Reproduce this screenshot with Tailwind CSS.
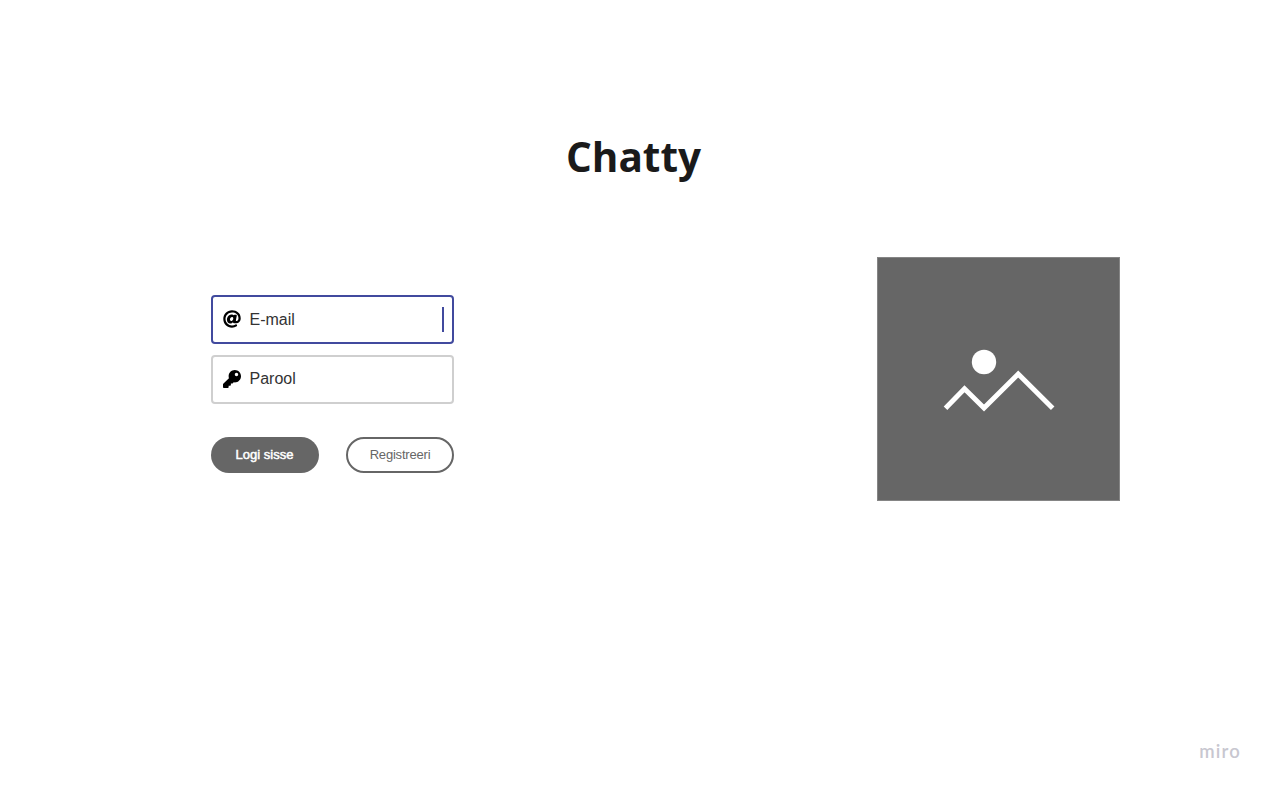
<!DOCTYPE html>
<html lang="et">
<head>
<meta charset="utf-8">
<title>Chatty</title>
<script src="https://cdn.jsdelivr.net/npm/@tailwindcss/browser@4"></script>
</head>
<body class="bg-white font-['Liberation_Sans',Arial,sans-serif]">
<div class="flex h-[787px] w-[1269px] flex-col overflow-hidden">
  <header class="flex h-[257px] shrink-0 justify-center pt-[129px]">
    <h1 class="h-[56px] pr-[2px] font-['Open_Sans',sans-serif] text-[40.5px] leading-[56px] font-bold text-[#1a1a1a]">Chatty</h1>
  </header>
  <main class="flex flex-1 items-start justify-between pr-[149px] pl-[210.5px]">
    <form class="w-[243.5px] pt-[38px]">
      <label class="flex h-[49px] items-center rounded-[4px] border-2 border-[#414a9e] pr-[8px] pl-[10px]">
        <svg class="mb-px size-[18px]" viewBox="0 0 512 512"><path d="M256 8C118.941 8 8 118.919 8 256c0 137.059 110.919 248 248 248 48.154 0 95.342-14.14 135.408-40.223 12.005-7.815 14.625-24.288 5.552-35.372l-10.177-12.433c-7.671-9.371-21.179-11.667-31.373-5.129C325.92 429.757 291.314 440 256 440c-101.458 0-184-82.542-184-184S154.542 72 256 72c100.139 0 184 57.619 184 160 0 38.786-21.093 79.742-58.17 83.693-17.349-.454-16.91-12.857-13.476-30.024l23.433-121.11C394.653 149.75 383.308 136 368.225 136h-44.981a13.518 13.518 0 0 0-13.432 11.993l-.01.092c-14.697-17.901-40.448-21.775-59.971-21.775-74.58 0-137.831 62.234-137.831 151.46 0 65.303 36.785 105.87 96 105.87 26.984 0 57.369-15.637 74.991-38.333 9.522 34.104 40.613 34.103 70.71 34.103C462.609 379.41 504 307.798 504 232 504 95.653 394.023 8 256 8zm-21.68 304.43c-22.249 0-36.07-15.623-36.07-40.771 0-44.993 30.779-72.729 58.63-72.729 22.292 0 35.601 15.241 35.601 40.77 0 45.061-33.875 72.73-58.161 72.73z"/></svg>
        <span class="ml-[9px] flex-1 text-base text-[#333]">E-mail</span>
        <span class="h-[25px] w-[2px] bg-[#414a9e]"></span>
      </label>
      <label class="mt-[10.5px] flex h-[49px] items-center rounded-[4px] border-2 border-[#cfcfcf] pl-[10px]">
        <svg class="size-[18px]" viewBox="0 0 512 512"><path d="M512 176.001C512 273.203 433.202 352 336 352c-11.22 0-22.19-1.062-32.827-3.069l-24.012 27.014A23.999 23.999 0 0 1 261.223 384H224v40c0 13.255-10.745 24-24 24h-40v40c0 13.255-10.745 24-24 24H24c-13.255 0-24-10.745-24-24v-78.059c0-6.365 2.529-12.47 7.029-16.971l161.802-161.802C163.108 213.814 160 195.271 160 176 160 78.798 238.797.001 335.999 0 433.488-.001 512 78.511 512 176.001zM336 128c0 26.51 21.49 48 48 48s48-21.49 48-48-21.49-48-48-48-48 21.49-48 48z"/></svg>
        <span class="ml-[9px] text-base text-[#333]">Parool</span>
      </label>
      <div class="mt-[33px] flex justify-between">
        <button type="button" class="h-[36px] w-[108px] rounded-full bg-[#666] text-[13px] text-white [-webkit-text-stroke:0.5px_white]">Logi sisse</button>
        <button type="button" class="h-[36px] w-[108px] rounded-full border-2 border-[#666] text-[13px] tracking-[-0.2px] text-[#666]">Registreeri</button>
      </div>
    </form>
    <svg class="h-[243.5px] w-[243px] border border-[#858585] bg-[#666]" viewBox="878 258 241 241.5" fill="none">
      <circle cx="984" cy="362" r="12.2" fill="#fff"/>
      <path d="M945.5 408.2 964.5 388.8 984 408 1018.2 374 1052.7 408.2" stroke="#fff" stroke-width="5"/>
    </svg>
  </main>
  <footer class="flex h-[50px] shrink-0 justify-end pr-[28px]">
    <span class="h-[24px] font-['Lato',sans-serif] text-[18.5px] leading-[29px] font-semibold tracking-[1.2px] text-[#c8c7d0]">miro</span>
  </footer>
</div>
</body>
</html>
